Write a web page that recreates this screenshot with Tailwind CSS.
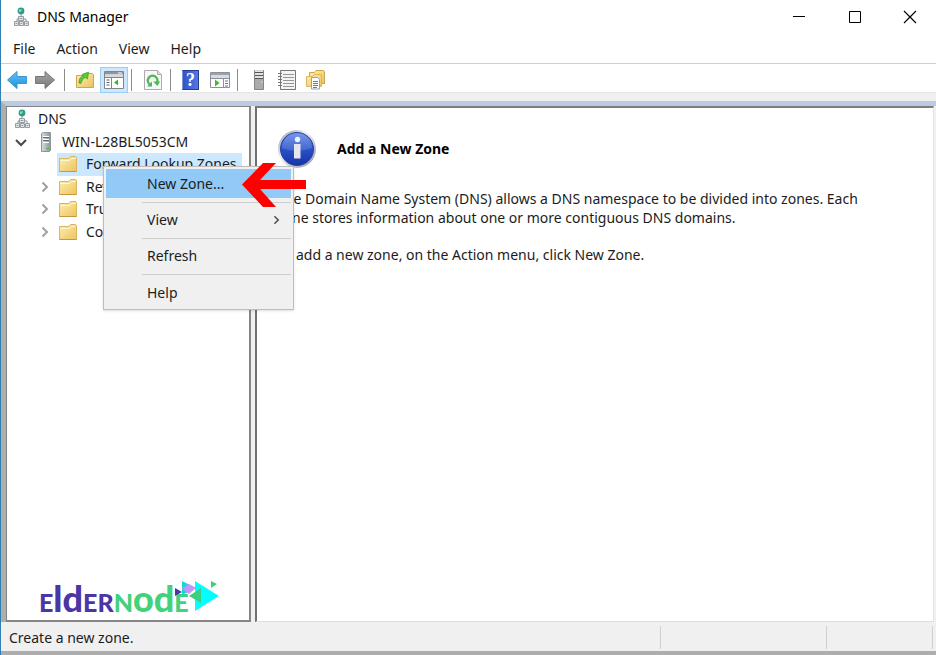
<!DOCTYPE html>
<html lang="en">
<head>
<meta charset="utf-8">
<title>DNS Manager</title>
<script src="https://cdn.jsdelivr.net/npm/@tailwindcss/browser@4"></script>
</head>
<body class="h-screen overflow-hidden bg-white font-['Noto_Sans','Open_Sans',sans-serif] text-sm text-[#1c1c1c]">
<svg class="absolute size-0" aria-hidden="true">
  <defs>
    <linearGradient id="gFolder" x1="0" y1="0" x2="1" y2="1"><stop offset="0" stop-color="#fdeeb0"/><stop offset="1" stop-color="#ecc45e"/></linearGradient>
    <linearGradient id="gServer" x1="0" y1="0" x2="1" y2="0"><stop offset="0" stop-color="#d9dde0"/><stop offset="1" stop-color="#8b9399"/></linearGradient>
    <linearGradient id="gBlue" x1="0" y1="0" x2="0" y2="1"><stop offset="0" stop-color="#5fc6fb"/><stop offset="1" stop-color="#1d8fdc"/></linearGradient>
    <linearGradient id="gGray" x1="0" y1="0" x2="0" y2="1"><stop offset="0" stop-color="#a8a8a8"/><stop offset="1" stop-color="#777"/></linearGradient>
    <linearGradient id="gInfo" x1="0" y1="0" x2="0" y2="1"><stop offset="0" stop-color="#5f88e6"/><stop offset=".45" stop-color="#2c55cb"/><stop offset="1" stop-color="#1633a6"/></linearGradient>
    <linearGradient id="gRing" x1="0" y1="0" x2="1" y2="1"><stop offset="0" stop-color="#8f959f"/><stop offset=".4" stop-color="#eceef1"/><stop offset="1" stop-color="#8e939c"/></linearGradient>
  </defs>
  <symbol id="dns" viewBox="0 0 16 20">
    <circle cx="7" cy="4" r="3.4" fill="#2f9c8b"/><path d="M5 2.500h3l-1 2-2 .5z" fill="#8fe0c4"/>
    <path d="M7 7v5M3 15v-3h9v3" fill="none" stroke="#8d9499"/>
    <g fill="#e4e7ea" stroke="#959ca2"><path d="M4.500 9.500h5v4h-5zM.5 14.500h4v4h-4zM5.500 14.500h4v4h-4zM10.500 14.500h4v4h-4z"/></g>
    <path d="M5.500 11.500h3M1.500 16.500h2M6.500 16.500h2M11.500 16.500h2" stroke="#9aa2a8"/>
  </symbol>
  <symbol id="folder" viewBox="0 0 18 18">
    <path d="M.5 3.500h9l2-2h5l1 1v14h-17z" fill="url(#gFolder)" stroke="#dbb65e"/>
    <path d="M1.500 5.500h9l2-2h4" fill="none" stroke="#fff7d2"/><path d="M.5 16.500h17" stroke="#c49a3e"/>
  </symbol>
  <symbol id="server" viewBox="0 0 12 20">
    <path d="M1.500 1.500l2-1h7v18l-1 1h-8z" fill="url(#gServer)" stroke="#8f979c"/>
    <path d="M3 4.500h6M3 7.500h6M3 10.500h6" stroke="#fff"/><path d="M3 5.500h6M3 8.500h6" stroke="#646c72"/><path d="M6 16.500h3" stroke="#5fae4c"/>
  </symbol>
  <symbol id="chev" viewBox="0 0 8 12"><path d="M1.500 1.500L6 6l-4.500 4.500" fill="none" stroke="currentColor" stroke-width="2"/></symbol>
</svg>

<div class="flex h-full flex-col border-l border-[#2f7fb5]">
  <header class="flex h-[33px] shrink-0 items-center pl-[13px]">
    <svg class="h-5 w-4"><use href="#dns"/></svg>
    <h1 class="ml-[7px] text-sm font-normal text-black">DNS Manager</h1>
    <div class="ml-auto flex h-full">
      <button aria-label="Minimize" class="flex w-14 items-center justify-center"><svg class="size-3" viewBox="0 0 12 12"><path d="M0 5.500h12" stroke="#000"/></svg></button>
      <button aria-label="Maximize" class="flex w-14 items-center justify-center"><svg class="size-3" viewBox="0 0 12 12"><path d="M.5.5h11v11H.5z" fill="none" stroke="#000"/></svg></button>
      <button aria-label="Close" class="flex w-[53px] items-center justify-center pr-[-2px]"><svg class="size-3 overflow-visible" viewBox="0 0 12 12"><path d="M0 0l12 12M12 0L0 12" stroke="#000" stroke-width="1.200"/></svg></button>
    </div>
  </header>

  <nav class="flex h-[31px] shrink-0 items-center gap-[21px] border-b border-[#cfcfcf] pt-[2px] pl-3">
    <button>File</button><button>Action</button><button>View</button><button>Help</button>
  </nav>

  <div role="toolbar" aria-label="Tools" class="flex h-[29px] shrink-0 items-center border-b border-[#e4e4e4] pt-[3px] pl-[6px]">
    <button aria-label="Back" class="w-[28px]"><svg class="h-5 w-5" viewBox="0 0 20 20"><path d="M.5 10L10 1.500v5h9.500v7H10v5z" fill="url(#gBlue)" stroke="#3d94cf"/></svg></button>
    <button aria-label="Forward" class="w-[29px]"><svg class="h-5 w-5" viewBox="0 0 20 20"><path d="M19.500 10L10 1.500v5H.5v7H10v5z" fill="url(#gGray)" stroke="#777"/></svg></button>
    <span class="h-[22px] w-px bg-[#8c8c8c]"></span>
    <button aria-label="Up one level" class="ml-[10px]"><svg class="size-5" viewBox="0 0 20 20"><path d="M1.500 5.500h9l2-2h5l1 1v13h-17z" fill="url(#gFolder)" stroke="#cfa648"/><path d="M4 13c0-4 1-6 4.500-7L7 4.500 13.500 2 12.500 9l-2-1.500C8 8.500 7 10 6 13.500z" fill="#5cc63c" stroke="#3a9c24" stroke-width=".7"/></svg></button>
    <button aria-label="Show or hide console tree" class="ml-[5px] flex h-[26px] w-7 items-center justify-center border border-[#99cdf5] bg-[#cfe7fb]"><svg class="size-5 shrink-0" viewBox="0 0 20 18"><path d="M.5.5h19v17H.5z" fill="#fff" stroke="#7e868e"/><path d="M1 1h18v2.500H1z" fill="#8d959d"/><path d="M1 3.500h18v3H1z" fill="#d6dbe0"/><path d="M7.500 6.500V17M1 6.500h18" stroke="#7e868e"/><path d="M2.500 9h3M2.500 11.500h3M2.500 14h3" stroke="#59626b"/><path d="M14 8.500v6L10 11.500z" fill="#3bb331"/><path d="M14 2h4" stroke="#fff"/></svg></button>
    <span class="ml-[3px] h-[22px] w-px bg-[#8c8c8c]"></span>
    <button aria-label="Refresh" class="ml-[12px]"><svg class="h-5 w-[18px]" viewBox="0 0 18 20"><path d="M.5.5h13l4 4v15H.5z" fill="#f8f8f8" stroke="#b0a8b0"/><path d="M13.500.5v4h4" fill="#ddd" stroke="#b0a8b0"/><path d="M6 14.500A4.800 4.800 0 1 1 13 12.500" fill="none" stroke="#4db956" stroke-width="2.400"/><path d="M9 11.500h7L13.500 16z" fill="#4db956"/><path d="M3 16.500h5v-5z" fill="#4db956"/></svg></button>
    <span class="ml-[8px] h-[22px] w-px bg-[#8c8c8c]"></span>
    <button aria-label="Help topics" class="ml-[11px] flex h-5 w-[17px] items-center justify-center border border-[#263c91] border-l-[#7f93df] bg-linear-to-r from-[#3456c4] to-[#5676e0] font-['Liberation_Serif',serif] text-lg leading-none font-bold text-white">?</button>
    <button aria-label="Show or hide action pane" class="ml-[11px]"><svg class="h-5 w-5" viewBox="0 0 20 20"><path d="M.5 2.500h19v15H.5z" fill="#fff" stroke="#8a9199"/><path d="M1 3h18v2H1z" fill="#9ba2a9"/><path d="M1 5h18v3H1z" fill="#d8dce0"/><path d="M13.500 8v9.500M1 8.500h18" stroke="#8a9199"/><path d="M15 11h3M15 13.500h3M15 16h3" stroke="#4b78b8"/><path d="M5 9.500v7l4.500-3.500z" fill="#43b52e"/></svg></button>
    <span class="ml-[7px] h-[22px] w-px bg-[#8c8c8c]"></span>
    <button aria-label="New server" class="ml-[15px]"><svg class="h-5 w-3" viewBox="0 0 12 20"><path d="M1.500.5h9v19h-9z" fill="#ababab" stroke="#858585"/><path d="M2 1h8M2 4h8M2 7h8" stroke="#f4f4f4" stroke-width="1.500"/><path d="M2 2.500h8M2 5.500h8M2 8.500h8" stroke="#555"/><path d="M8 12h1.500" stroke="#eee"/></svg></button>
    <button aria-label="New record list" class="ml-[13px]"><svg class="h-5 w-[18px]" viewBox="0 0 18 20"><path d="M2.500.5h15v19h-15z" fill="#f3f3f3" stroke="#777"/><path d="M5 4.500h11M5 7.500h11M5 10.500h11M5 13.500h11M5 16.500h11" stroke="#959595"/><path d="M0 3.500h4M0 6.500h4M0 9.500h4M0 12.500h4M0 15.500h4" stroke="#777"/></svg></button>
    <button aria-label="New zone" class="ml-[10px]"><svg class="h-5 w-[19px]" viewBox="0 0 19 20"><path d="M3.500 2.500h5l1.500-2h7.500l1 1v12h-15z" fill="url(#gFolder)" stroke="#cda548"/><path d="M.5 6.500h6l2-2h7v12H.5z" fill="url(#gFolder)" stroke="#dbb65e"/><path d="M5.500 7.500h6l2 2v9.500h-8z" fill="#fff" stroke="#8fa3bb"/><path d="M7 11.500h5M7 13.500h5M7 15.500h5M7 17.500h4" stroke="#4c80bd"/></svg></button>
  </div>

  <div class="h-2 shrink-0 bg-[#f0f0f0]"></div>

  <main class="relative flex min-h-0 flex-1 border-t-[5px] border-l-[5px] border-t-[#b9cbe2] border-l-[#aeaeae] bg-[#f0f0f0] pr-[2px]">
    <aside class="flex w-[245px] shrink-0 flex-col border-t border-r-2 border-b-2 border-l border-[#858585] bg-white pt-px">
      <ul role="tree" aria-label="Console tree" class="grid h-[135px] grid-rows-6">
        <li role="treeitem" class="flex min-h-0 items-center pl-2"><svg class="h-5 w-4"><use href="#dns"/></svg><span class="ml-[7px]">DNS</span></li>
        <li role="treeitem" class="flex min-h-0 items-center pl-2"><svg class="h-3 w-3" viewBox="0 0 12 12"><path d="M1 4l5 5 5-5" fill="none" stroke="#484848" stroke-width="2"/></svg><svg class="ml-[13px] h-5 w-3"><use href="#server"/></svg><span class="ml-[10px]">WIN-L28BL5053CM</span></li>
        <li role="treeitem" aria-selected="true" class="mr-[7px] ml-[50px] flex min-h-0 items-center bg-[#cce8ff] pl-[2px]"><svg class="size-[18px]"><use href="#folder"/></svg><span class="ml-[9px] whitespace-nowrap">Forward Lookup Zones</span></li>
        <li role="treeitem" class="flex min-h-0 items-center pl-[34px] text-[#a0a0a0]"><svg class="h-3 w-2"><use href="#chev"/></svg><svg class="ml-[10px] size-[18px]"><use href="#folder"/></svg><span class="ml-[9px] whitespace-nowrap text-[#1c1c1c]">Reverse Lookup Zones</span></li>
        <li role="treeitem" class="flex min-h-0 items-center pl-[34px] text-[#a0a0a0]"><svg class="h-3 w-2"><use href="#chev"/></svg><svg class="ml-[10px] size-[18px]"><use href="#folder"/></svg><span class="ml-[9px] text-[#1c1c1c]">Trust Points</span></li>
        <li role="treeitem" class="flex min-h-0 items-center pl-[34px] text-[#a0a0a0]"><svg class="h-3 w-2"><use href="#chev"/></svg><svg class="ml-[10px] size-[18px]"><use href="#folder"/></svg><span class="ml-[9px] whitespace-nowrap text-[#1c1c1c]">Conditional Forwarders</span></li>
      </ul>
      <div class="mt-auto ml-8 flex items-start">
        <div class="font-[Lato,sans-serif] text-[25px] leading-9 font-black whitespace-nowrap text-[#4a36a5]">E<span class="text-[36px]">ld</span>ER<span class="text-[#43d17c]">N<span class="text-[36px]">od</span>E</span></div>
        <svg class="-ml-[14px] h-9 w-11 shrink-0" viewBox="0 0 44 36"><path d="M20 1l24 15-24 15z" fill="#0ff"/><path d="M7 1l14 7-14 7z" fill="#16d5df"/><path d="M7 8.500L14 4l7 4-7 6z" fill="#c795f8"/><path d="M14 16l12-8v15z" fill="#3bd080"/><path d="M0 8l7 4-7 4z" fill="#4a36a5"/><path d="M36 1l6 3-6 4z" fill="#3bd080"/></svg>
      </div>
    </aside>

    <section class="ml-[4px] min-w-0 flex-1 border-t-2 border-r border-b border-l-2 border-t-[#7d7d7d] border-r-[#e2e2e2] border-b-[#dedede] border-l-[#707070] bg-white pt-[21px] pl-5">
      <div class="flex items-center">
        <svg class="size-10" viewBox="0 0 40 40" role="img" aria-label="Information"><circle cx="20" cy="20" r="19" fill="url(#gRing)"/><circle cx="20" cy="20" r="16.500" fill="url(#gInfo)" stroke="#2443a8"/><path d="M5 19a15 15 0 0 1 30 0Q20 25 5 19z" fill="#fff" opacity=".15"/><circle cx="20.500" cy="10.500" r="2.700" fill="#f2f2f2"/><path d="M17 15h6.500v14.500H17z" fill="#e6e7ea"/></svg>
        <h2 class="ml-5 font-bold text-black">Add a New Zone</h2>
      </div>
      <p class="mt-5 max-w-[610px] leading-[19px]">The Domain Name System (DNS) allows a DNS namespace to be divided into zones. Each zone stores information about one or more contiguous DNS domains.</p>
      <p class="mt-[18px] leading-[19px]">To add a new zone, on the Action menu, click New Zone.</p>
    </section>

    <div role="menu" class="absolute top-[60px] left-[97px] w-[191px] border border-[#bdbdbd] bg-[#f0f0f0] p-[2px] shadow-sm">
      <button role="menuitem" class="block h-[29px] w-full bg-[#91c9f7] pl-[41px] text-left">New Zone...</button>
      <hr class="mt-1 mb-[3px] ml-9 border-[#cecece]">
      <button role="menuitem" class="flex h-[28px] w-full items-center pr-[11px] pl-[41px] text-left">View<svg class="ml-auto h-[10px] w-[7px] text-[#555]"><use href="#chev"/></svg></button>
      <hr class="mt-1 mb-[3px] ml-9 border-[#cecece]">
      <button role="menuitem" class="block h-[28px] w-full pl-[41px] text-left">Refresh</button>
      <hr class="mt-1 mb-[3px] ml-9 border-[#cecece]">
      <button role="menuitem" class="block h-[29px] w-full pl-[41px] text-left">Help</button>
    </div>
    <svg class="absolute top-[56px] left-[236px] h-[46px] w-[64px]" viewBox="0 0 64 46" aria-hidden="true"><path d="M0 22.500L21 1h13L18 18h46v9H18l16 18H21z" fill="#f00"/></svg>
  </main>

  <footer class="flex h-[33px] shrink-0 border-b-4 border-[#adadad] bg-[#f0f0f0] pt-[2px] pr-[3px]">
    <div class="flex flex-1 items-center pt-px pl-2">Create a new zone.</div>
    <div class="my-[2px] w-[166px] border-l border-[#cfcfcf]"></div>
    <div class="my-[2px] w-[107px] border-x border-[#cfcfcf]"></div>
  </footer>
</div>
</body>
</html>
